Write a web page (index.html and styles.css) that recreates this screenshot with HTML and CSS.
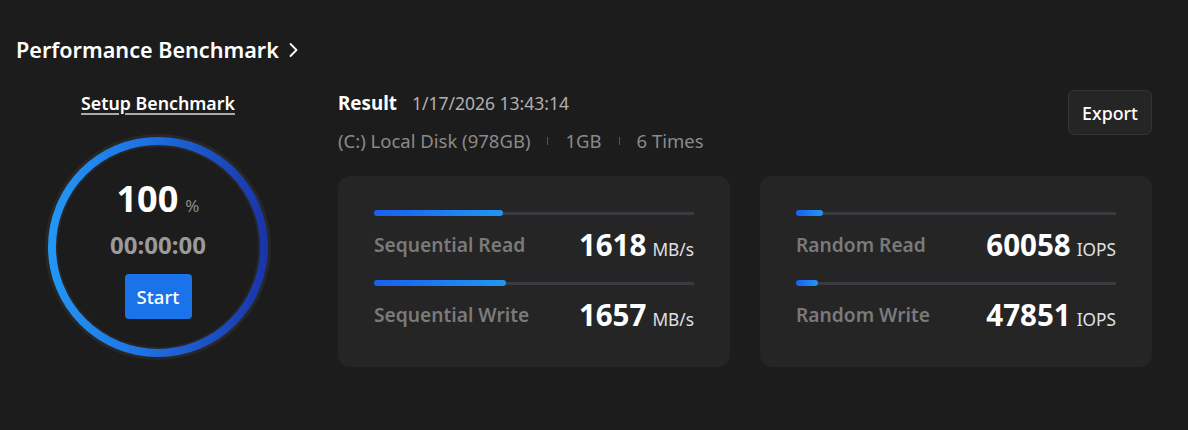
FILE: index.html
```html
<!DOCTYPE html>
<html>
<head>
<meta charset="utf-8">
<link rel="stylesheet" href="styles.css">
</head>
<body>
<div class="page">
  <div class="title">Performance Benchmark
    <svg class="chev" width="12" height="16" viewBox="0 0 12 16"><path d="M3.5 2 L9.5 8 L3.5 14" fill="none" stroke="#fff" stroke-width="1.8" stroke-linecap="round" stroke-linejoin="round"/></svg>
  </div>
  <div class="main">
    <div class="left">
      <a class="setup">Setup Benchmark</a>
      <div class="dial">
        <div class="ring">
          <div class="disc">
            <div class="pct"><span class="pnum">100</span><span class="psign">%</span></div>
            <div class="time">00:00:00</div>
            <button class="start">Start</button>
          </div>
        </div>
      </div>
    </div>
    <div class="right">
      <div class="head">
        <div class="info">
          <div class="resline"><span class="res">Result</span><span class="date">1/17/2026 13:43:14</span></div>
          <div class="meta"><span>(C:) Local Disk (978GB)</span><i class="sep"></i><span>1GB</span><i class="sep"></i><span>6 Times</span></div>
        </div>
        <button class="export">Export</button>
      </div>
      <div class="cards">
        <div class="card">
          <div class="stat">
            <div class="track"><div class="fill" style="width:40.3%"></div></div>
            <div class="row"><span class="label">Sequential Read</span><span class="val"><b>1618</b><span class="unit">MB/s</span></span></div>
          </div>
          <div class="stat">
            <div class="track"><div class="fill" style="width:41.3%"></div></div>
            <div class="row"><span class="label">Sequential Write</span><span class="val"><b>1657</b><span class="unit">MB/s</span></span></div>
          </div>
        </div>
        <div class="card">
          <div class="stat">
            <div class="track"><div class="fill" style="width:8.5%"></div></div>
            <div class="row"><span class="label">Random Read</span><span class="val"><b>60058</b><span class="unit">IOPS</span></span></div>
          </div>
          <div class="stat">
            <div class="track"><div class="fill" style="width:7%"></div></div>
            <div class="row"><span class="label">Random Write</span><span class="val"><b>47851</b><span class="unit">IOPS</span></span></div>
          </div>
        </div>
      </div>
    </div>
  </div>
</div>
</body>
</html>
```
FILE: styles.css
```css
* { box-sizing: border-box; }
html, body { margin: 0; height: 100%; }
body {
  background: #1c1c1c;
  font-family: "Noto Sans", "Open Sans", sans-serif;
  color: #fff;
}
.page { padding: 36px 36px 0 16px; }
.title {
  font-size: 21.6px;
  font-weight: 600;
  line-height: 28px;
  display: flex;
  align-items: center;
  gap: 8px;
}
.chev { display: block; }
.main {
  display: flex;
  gap: 38px;
  margin-top: 26px;
}
.left {
  width: 284px;
  display: flex;
  flex-direction: column;
  align-items: center;
}
.setup {
  font-size: 17.8px;
  font-weight: 600;
  line-height: 24px;
  margin-top: 1px;
  text-decoration: underline;
  text-decoration-color: #aaa;
  text-decoration-thickness: 2px;
  text-underline-offset: 3px;
  color: #fff;
}
.dial {
  margin-top: 19px;
  width: 226px;
  height: 226px;
  border-radius: 50%;
  background: #272727;
  padding: 3px;
}
.ring {
  width: 100%;
  height: 100%;
  border-radius: 50%;
  background: linear-gradient(90deg, #2298f5 0%, #1e70e2 45%, #1a33a6 100%);
  padding: 8px;
}
.disc {
  width: 100%;
  height: 100%;
  border-radius: 50%;
  background: #1c1c1c;
  border: 2px solid #262626;
  display: flex;
  flex-direction: column;
  align-items: center;
  padding-top: 30px;
}
.pct { display: flex; align-items: baseline; gap: 7px; line-height: 44px; }
.pnum { font-size: 36px; font-weight: 700; }
.psign { font-size: 17px; color: #8a8a8a; }
.time {
  font-size: 24px;
  font-weight: 700;
  color: #9a9a9a;
  line-height: 30px;
  margin-top: 2px;
}
.start {
  margin-top: 14px;
  width: 67px;
  height: 45px;
  border: 0;
  border-radius: 4px;
  background: #1a73e8;
  color: #fff;
  font-family: inherit;
  font-size: 18.5px;
  font-weight: 500;
  padding: 0;
}
.right { flex: 1; display: flex; flex-direction: column; }
.head { display: flex; justify-content: space-between; align-items: flex-start; }
.resline { display: flex; align-items: baseline; gap: 15px; line-height: 26px; }
.res { font-size: 18.8px; font-weight: 700; }
.date { font-size: 17.5px; color: #b0b0b0; }
.meta {
  margin-top: 13px;
  line-height: 24px;
  font-size: 18.5px;
  color: #8a8a8a;
  display: flex;
  align-items: center;
}
.sep {
  display: block;
  width: 1px;
  height: 8px;
  background: #555;
  margin: 0 17px;
}
.export {
  width: 84px;
  height: 45px;
  border: 1px solid #333;
  border-radius: 6px;
  background: #252525;
  color: #fff;
  font-family: inherit;
  font-size: 17.8px;
  font-weight: 500;
  padding: 0;
}
.cards {
  margin-top: 23px;
  display: flex;
  gap: 30px;
}
.card {
  flex: 1;
  height: 191px;
  background: #252525;
  border-radius: 12px;
  padding: 34px 36px 0 36px;
  display: flex;
  flex-direction: column;
  gap: 18px;
}
.track {
  height: 6px;
  background: linear-gradient(#393b40, #393b40) center / 100% 3px no-repeat;
}
.fill {
  height: 6px;
  border-radius: 3px;
  background: linear-gradient(90deg, #1a5ff0, #2196f3);
}
.row {
  margin-top: 10px;
  height: 36px;
  display: flex;
  justify-content: space-between;
  align-items: center;
}
.label { font-size: 19.2px; font-weight: 600; color: #7a7a7a; }
.val { display: flex; align-items: baseline; gap: 6px; }
.val b { font-size: 29.5px; font-weight: 700; }
.unit { font-size: 17.3px; color: #e0e0e0; }
```
